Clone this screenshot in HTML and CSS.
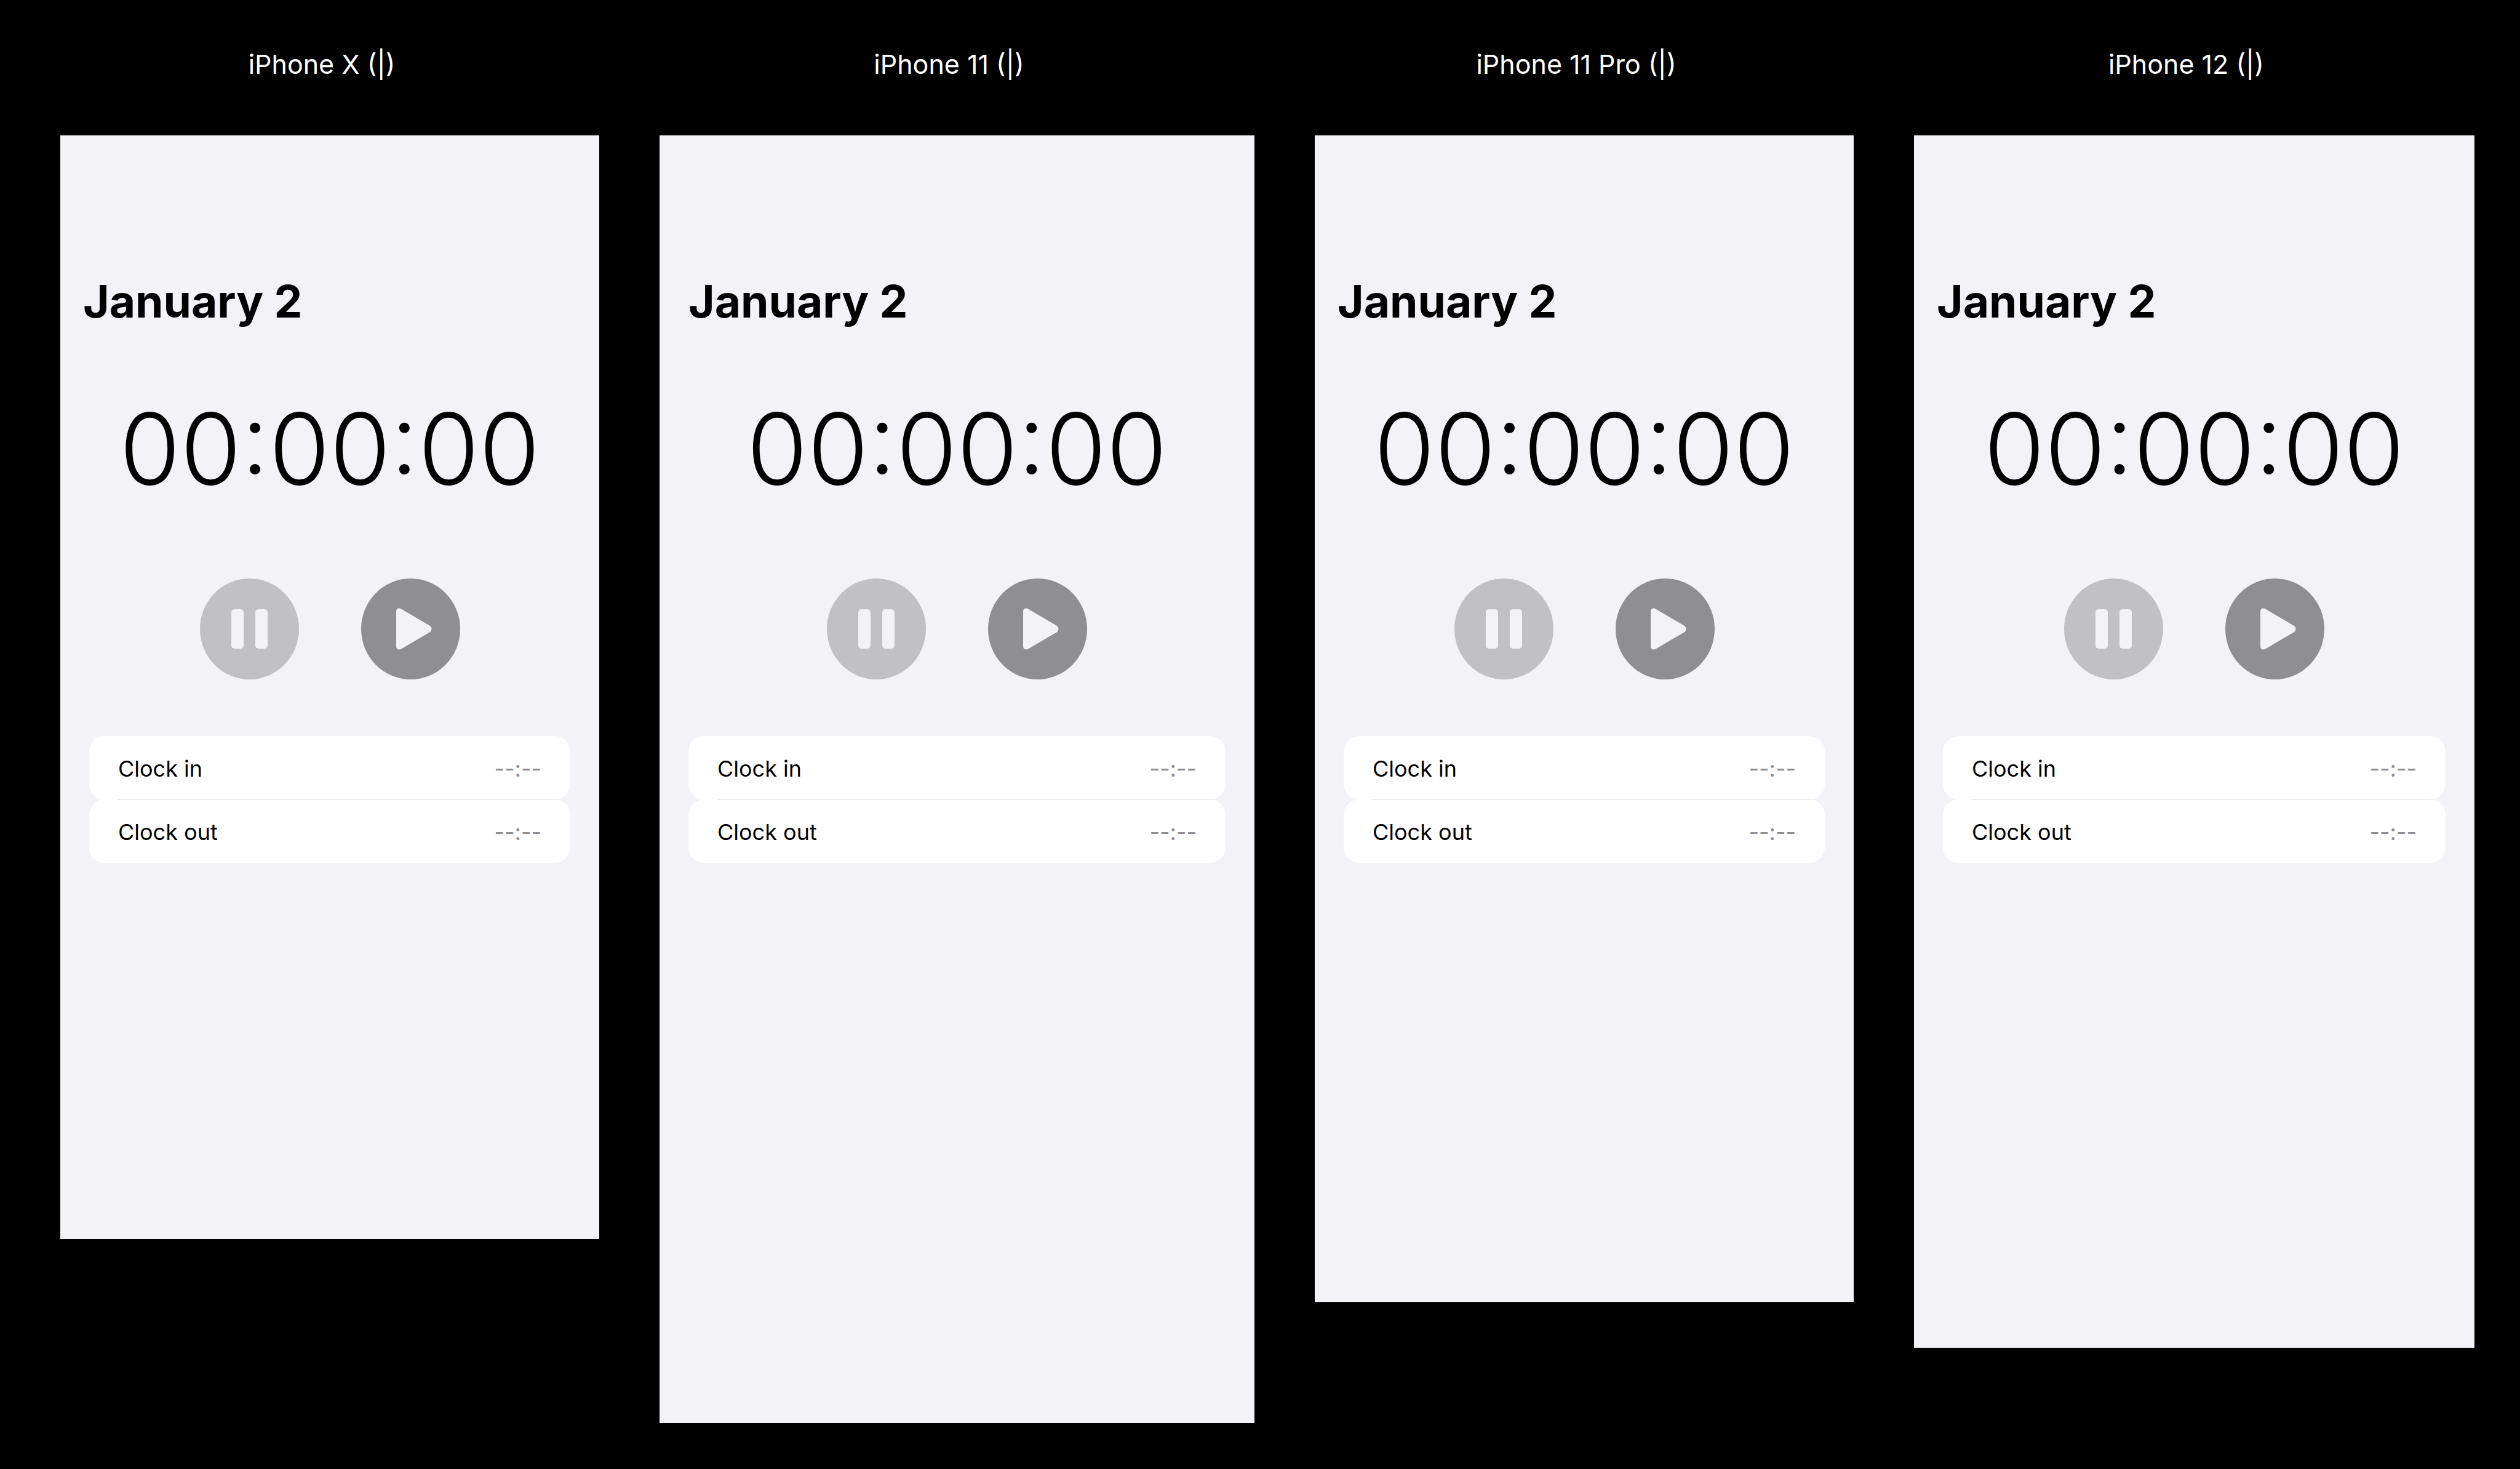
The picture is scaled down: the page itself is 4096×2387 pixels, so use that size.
FILE: index.html
```
<!DOCTYPE html>
<html lang="en">
<head>
<meta charset="utf-8">
<title>Time clock previews</title>
<link rel="stylesheet" href="styles.css">
</head>
<body>
<svg class="sprite" aria-hidden="true">
  <symbol id="pause" viewBox="0 0 161 164">
    <rect x="51" y="50" width="20" height="64" rx="5"/>
    <rect x="90" y="50" width="20" height="64" rx="5"/>
  </symbol>
  <symbol id="play" viewBox="0 0 161 164">
    <path d="M57 54C57 49 61 47 66 50L112 77Q117 82 112 87L66 114C61 117 57 115 57 110Z"/>
  </symbol>
</svg>
<main class="gallery">
  <section class="preview">
    <h2 class="device">iPhone X (|)</h2>
    <article class="screen screen-x">
      <h1 class="date">January 2</h1>
      <time class="timer">00:00:00</time>
      <div class="controls">
        <button class="control paused" aria-label="Pause" disabled><svg class="icon"><use href="#pause"/></svg></button>
        <button class="control" aria-label="Start"><svg class="icon"><use href="#play"/></svg></button>
      </div>
      <dl class="entries">
        <div class="entry"><dt class="name">Clock in</dt><dd class="value">--:--</dd></div>
        <div class="entry"><dt class="name">Clock out</dt><dd class="value">--:--</dd></div>
      </dl>
    </article>
  </section>
  <section class="preview">
    <h2 class="device">iPhone 11 (|)</h2>
    <article class="screen screen-11">
      <h1 class="date">January 2</h1>
      <time class="timer">00:00:00</time>
      <div class="controls">
        <button class="control paused" aria-label="Pause" disabled><svg class="icon"><use href="#pause"/></svg></button>
        <button class="control" aria-label="Start"><svg class="icon"><use href="#play"/></svg></button>
      </div>
      <dl class="entries">
        <div class="entry"><dt class="name">Clock in</dt><dd class="value">--:--</dd></div>
        <div class="entry"><dt class="name">Clock out</dt><dd class="value">--:--</dd></div>
      </dl>
    </article>
  </section>
  <section class="preview">
    <h2 class="device">iPhone 11 Pro (|)</h2>
    <article class="screen screen-11-pro">
      <h1 class="date">January 2</h1>
      <time class="timer">00:00:00</time>
      <div class="controls">
        <button class="control paused" aria-label="Pause" disabled><svg class="icon"><use href="#pause"/></svg></button>
        <button class="control" aria-label="Start"><svg class="icon"><use href="#play"/></svg></button>
      </div>
      <dl class="entries">
        <div class="entry"><dt class="name">Clock in</dt><dd class="value">--:--</dd></div>
        <div class="entry"><dt class="name">Clock out</dt><dd class="value">--:--</dd></div>
      </dl>
    </article>
  </section>
  <section class="preview">
    <h2 class="device">iPhone 12 (|)</h2>
    <article class="screen screen-12">
      <h1 class="date">January 2</h1>
      <time class="timer">00:00:00</time>
      <div class="controls">
        <button class="control paused" aria-label="Pause" disabled><svg class="icon"><use href="#pause"/></svg></button>
        <button class="control" aria-label="Start"><svg class="icon"><use href="#play"/></svg></button>
      </div>
      <dl class="entries">
        <div class="entry"><dt class="name">Clock in</dt><dd class="value">--:--</dd></div>
        <div class="entry"><dt class="name">Clock out</dt><dd class="value">--:--</dd></div>
      </dl>
    </article>
  </section>
</main>
</body>
</html>
```
FILE: styles.css
```
* { box-sizing: border-box; margin: 0; padding: 0; }

body {
  background: #000;
  color: #000;
  font-family: "Inter", "Liberation Sans", sans-serif;
}

.sprite { display: none; }

.gallery {
  display: grid;
  grid-template-columns: 876fr 967fr 876fr 911fr;
  align-items: start;
  gap: 98px;
  padding: 76px 74px 0 98px;
}

.preview {
  display: flex;
  flex-direction: column;
  gap: 88px;
}

.device {
  padding-right: 26px;
  color: #fff;
  font-size: 43px;
  font-weight: 400;
  line-height: 56px;
  text-align: center;
}

.screen {
  display: flex;
  flex-direction: column;
  padding-top: 222px;
  background: #f2f2f7;
}

.screen-x { aspect-ratio: 876 / 1793; }
.screen-11 { aspect-ratio: 967 / 2092; }
.screen-11-pro { aspect-ratio: 876 / 1896; }
.screen-12 { aspect-ratio: 911 / 1970; }

.date {
  padding: 0 37px;
  font-size: 73px;
  font-weight: 700;
  line-height: 96px;
}

.screen-11 .date { padding: 0 47px; }

.timer {
  margin-top: 91px;
  font-size: 160px;
  font-variation-settings: "opsz" 32;
  font-weight: 300;
  line-height: 200px;
  text-align: center;
}

.controls {
  display: flex;
  justify-content: center;
  gap: 101px;
  margin-top: 111px;
}

.control {
  width: 161px;
  height: 164px;
  border: 0;
  border-radius: 50%;
  background: #8e8e93;
}

.paused { background: #c1c0c5; }

.icon {
  display: block;
  width: 100%;
  height: 100%;
  fill: #f2f2f7;
}

.entries {
  margin: 92px 47px 0;
}

.entry {
  position: relative;
  display: flex;
  align-items: center;
  justify-content: space-between;
  height: 103px;
  padding: 3px 47px 0;
  overflow: hidden;
  border-radius: 25px;
  background: #fff;
  font-size: 36px;
  line-height: 48px;
}

.entry:not(:last-child)::after {
  content: "";
  position: absolute;
  right: 0;
  bottom: 0;
  left: 47px;
  height: 1px;
  background: #cececf;
}

.value { color: #8e8e93; }
```
